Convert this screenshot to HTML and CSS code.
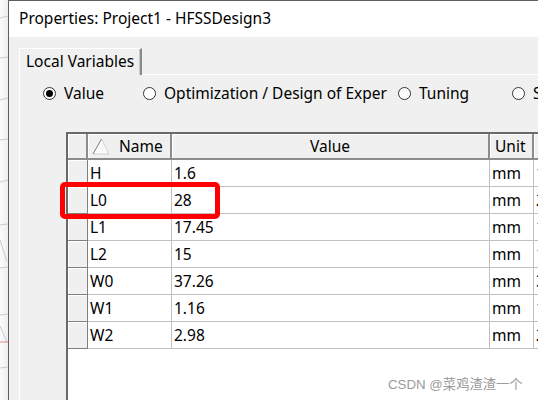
FILE: index.html
```html
<!DOCTYPE html>
<html>
<head>
<meta charset="utf-8">
<link rel="stylesheet" href="styles.css">
</head>
<body>
<div class="screen">
  <div class="canvas-strip">
    <svg width="8" height="400" viewBox="0 0 8 400">
      <g stroke="#c8c8dc" stroke-width="1" fill="none">
        <line x1="0" y1="18" x2="8" y2="16"/>
        <line x1="0" y1="58" x2="8" y2="57"/>
        <line x1="0" y1="100" x2="8" y2="98"/>
        <line x1="0" y1="140" x2="8" y2="139"/>
        <line x1="0" y1="182" x2="8" y2="180"/>
        <line x1="0" y1="225" x2="8" y2="224"/>
        <line x1="0" y1="240" x2="7" y2="262"/>
        <line x1="0" y1="268" x2="8" y2="267"/>
        <line x1="0" y1="315" x2="8" y2="314"/>
        <line x1="0" y1="326" x2="7" y2="342"/>
        <line x1="0" y1="368" x2="8" y2="367"/>
      </g>
      <line x1="0" y1="342" x2="8" y2="342" stroke="#d88" stroke-width="1"/>
    </svg>
  </div>
  <div class="window">
    <div class="titlebar">Properties: Project1 - HFSSDesign3</div>
    <div class="dialog">
      <div class="tabs">
        <div class="tab">Local Variables</div>
        <div class="tab-rest"></div>
      </div>
      <div class="pane">
        <div class="radios">
          <div class="radio r1"><span class="dot checked"></span><span>Value</span></div>
          <div class="radio r2"><span class="dot"></span><span>Optimization / Design of Exper</span></div>
          <div class="radio r3"><span class="dot"></span><span>Tuning</span></div>
          <div class="radio r4"><span class="dot"></span><span>Sensitivity</span></div>
        </div>
        <div class="grid">
          <div class="row head">
            <div class="c rh"></div>
            <div class="c name hname">
              <svg class="sort" width="18" height="17" viewBox="0 0 18 17">
                <polygon points="1,16 9.5,1 17,16" fill="#fafafa" stroke="#d0d0d0" stroke-width="1"/>
                <line x1="1" y1="16" x2="9.5" y2="1" stroke="#8a8a8a" stroke-width="1"/>
              </svg>
              <span>Name</span>
            </div>
            <div class="c value hval">Value</div>
            <div class="c unit">Unit</div>
            <div class="c ev"></div>
          </div>
          <div class="row"><div class="c rh"></div><div class="c name">H</div><div class="c value">1.6</div><div class="c unit">mm</div><div class="c ev">1.6mm</div></div>
          <div class="row"><div class="c rh"></div><div class="c name">L0</div><div class="c value">28</div><div class="c unit">mm</div><div class="c ev">28mm</div></div>
          <div class="row"><div class="c rh"></div><div class="c name">L1</div><div class="c value">17.45</div><div class="c unit">mm</div><div class="c ev">17.45mm</div></div>
          <div class="row"><div class="c rh"></div><div class="c name">L2</div><div class="c value">15</div><div class="c unit">mm</div><div class="c ev">15mm</div></div>
          <div class="row"><div class="c rh"></div><div class="c name">W0</div><div class="c value">37.26</div><div class="c unit">mm</div><div class="c ev">37.26mm</div></div>
          <div class="row"><div class="c rh"></div><div class="c name">W1</div><div class="c value">1.16</div><div class="c unit">mm</div><div class="c ev">1.16mm</div></div>
          <div class="row"><div class="c rh"></div><div class="c name">W2</div><div class="c value">2.98</div><div class="c unit">mm</div><div class="c ev">2.98mm</div></div>
        </div>
      </div>
    </div>
  </div>
  <div class="highlight"></div>
  <div class="watermark">CSDN @菜鸡渣渣一个</div>
</div>
</body>
</html>
```
FILE: styles.css
```css
* { box-sizing: border-box; }
html, body { margin: 0; padding: 0; }
body {
  width: 538px;
  height: 400px;
  overflow: hidden;
  font-family: "Noto Sans", "Noto Sans CJK SC", sans-serif;
  font-size: 15.5px;
  color: #000;
  background: #fff;
}
.screen {
  position: relative;
  display: flex;
  width: 538px;
  height: 400px;
  overflow: hidden;
}
.canvas-strip {
  width: 8px;
  flex: none;
  background: linear-gradient(to right, #fbfbfb, #eeeeee);
}
.canvas-strip svg { display: block; }
.window {
  flex: 1;
  min-width: 0;
  border-left: 1px solid #5e5e5e;
  border-top: 1px solid #5e5e5e;
  display: flex;
  flex-direction: column;
}
.titlebar {
  height: 36px;
  flex: none;
  background: #fff;
  padding-left: 10px;
  line-height: 35px;
  white-space: nowrap;
  color: #000;
}
.dialog {
  flex: 1;
  background: #f0f0f0;
  padding: 11px 0 0 10px;
  display: flex;
  flex-direction: column;
  min-height: 0;
}
.tabs {
  display: flex;
  height: 27px;
  flex: none;
}
.tab {
  width: 123px;
  height: 27px;
  border-top: 1px solid #ffffff;
  border-left: 1px solid #ffffff;
  border-right: 2px solid #8a8a8a;
  box-shadow: inset -1px 0 0 #c8c8c8;
  padding-left: 6px;
  line-height: 24px;
  white-space: nowrap;
}
.tab-rest {
  flex: 1;
  border-bottom: 1px solid #ffffff;
}
.pane {
  flex: 1;
  border-left: 1px solid #ffffff;
  padding: 8px 0 0 0;
  display: flex;
  flex-direction: column;
  min-height: 0;
}
.radios {
  display: flex;
  height: 20px;
  white-space: nowrap;
}
.radio {
  display: flex;
  align-items: center;
  gap: 8px;
  flex: none;
}
.r1 { width: 100px; margin-left: 23px; }
.r2 { width: 255px; }
.r3 { width: 114px; }
.r4 { width: 100px; }
.dot {
  width: 13px;
  height: 13px;
  border-radius: 50%;
  background: #fff;
  border: 1px solid #333;
  flex: none;
  display: flex;
  align-items: center;
  justify-content: center;
}
.dot.checked::after {
  content: "";
  width: 7px;
  height: 7px;
  border-radius: 50%;
  background: #000;
}
.grid {
  margin: 29px 0 0 46px;
  flex: 1;
  background: #fff;
  border-left: 2px solid #6a6a6a;
  border-top: 2px solid #6a6a6a;
  min-height: 0;
}
.row {
  display: flex;
  height: 27px;
}
.c {
  flex: none;
  height: 27px;
  border-right: 1px solid #c0c0c0;
  border-bottom: 1px solid #c0c0c0;
  padding-left: 2px;
  line-height: 26px;
  white-space: nowrap;
  overflow: hidden;
}
.rh { width: 20px; }
.name { width: 84px; }
.value { width: 318px; }
.unit { width: 44px; }
.ev { flex: 1; width: auto; border-right: none; }
.row .rh {
  background: #f0f0f0;
  border-right: 1px solid #808080;
  border-bottom: 1px solid #808080;
  box-shadow: inset 1px 1px 0 #ffffff;
  padding: 0;
}
.head { height: 26px; }
.head .c {
  height: 26px;
  background: #f0f0f0;
  border-right: 2px solid #8c8c8c;
  border-bottom: 2px solid #8c8c8c;
  box-shadow: inset 1px 1px 0 #ffffff;
  line-height: 24px;
}
.head .ev { border-right: none; }
.hname {
  display: flex;
  align-items: center;
  gap: 9px;
  padding-left: 4px;
}
.sort { display: block; margin-top: 1px; }
.hval { text-align: center; padding-left: 0; }
.head .unit { padding-left: 5px; }
.highlight {
  position: absolute;
  left: 60px;
  top: 182px;
  width: 160px;
  height: 37px;
  border: 5px solid #ff0000;
  border-radius: 5px;
}
.watermark {
  position: absolute;
  left: 388px;
  top: 374px;
  font-family: "Liberation Sans", "Noto Sans CJK SC", sans-serif;
  font-size: 13.3px;
  color: #9a9a9a;
  white-space: nowrap;
}
```
